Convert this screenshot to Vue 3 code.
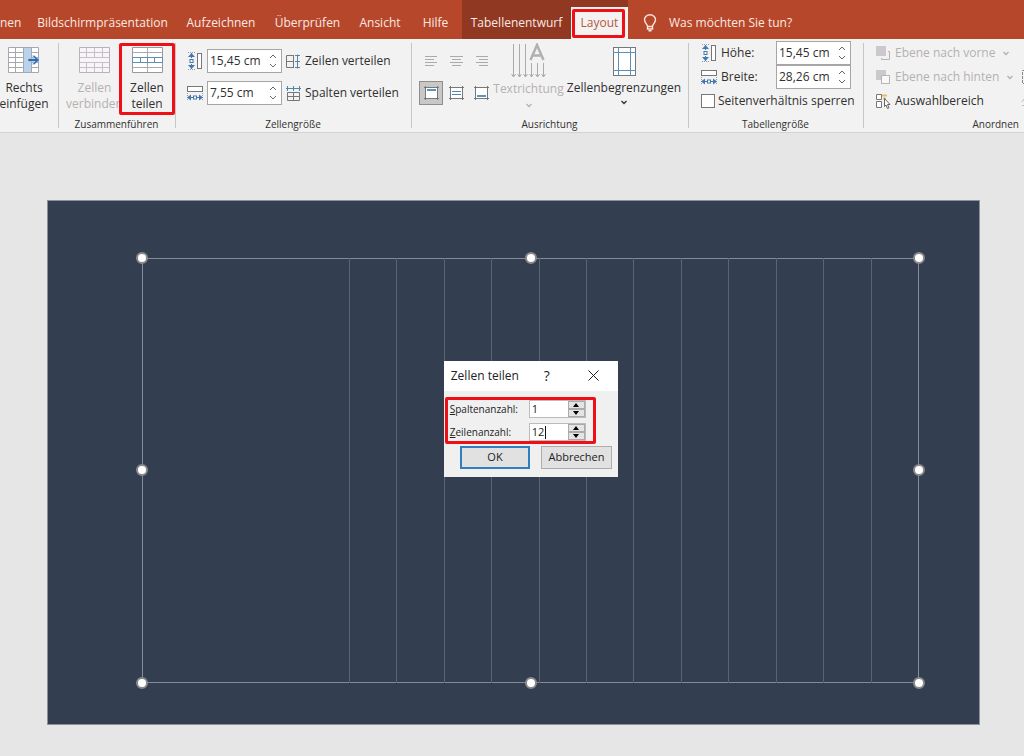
<script setup>
import { ref } from 'vue'

const tabs = [
  { name: 'nen', cls: 'w-cut' },
  { name: 'Bildschirmpräsentation', cls: 'w-xl' },
  { name: 'Aufzeichnen', cls: 'w-l' },
  { name: 'Überprüfen', cls: 'w-m' },
  { name: 'Ansicht', cls: 'w-s' },
  { name: 'Hilfe', cls: 'w-xs' }
]
const cellHeight = ref('15,45 cm')
const cellWidth = ref('7,55 cm')
const tableHeight = ref('15,45 cm')
const tableWidth = ref('28,26 cm')
const lockRatio = ref(false)
const columns = ref('1')
const rows = ref('12')
const handles = ['tl', 'tc', 'tr', 'ml', 'mr', 'bl', 'bc', 'br']
</script>

<template>
  <div class="app">
    <svg class="defs" aria-hidden="true">
      <symbol id="i-height" viewBox="0 0 16 18">
        <path d="M1 .5H9M1 17.5H9" stroke="#9a9a9a" stroke-dasharray="1 1" />
        <path d="M4.500 1V6M4.500 12V17" stroke="#4379b0" />
        <path d="M4.500 1 8 5H1ZM4.500 17 8 13H1Z" fill="#4379b0" />
        <rect x="3" y="7.500" width="3" height="3" fill="#fff" stroke="#4379b0" />
        <rect x="10.500" y="1.500" width="4" height="15" fill="#fff" stroke="#777" />
      </symbol>
      <symbol id="i-width" viewBox="0 0 16 18">
        <rect x=".5" y="2.500" width="15" height="5" fill="#fff" stroke="#777" />
        <path d="M.5 9V16M15.500 9V16" stroke="#9a9a9a" stroke-dasharray="1 1" />
        <path d="M1 13.500H6M10 13.500H15" stroke="#4379b0" />
        <path d="M0 13.500 4 10.500V16.500ZM16 13.500 12 10.500V16.500Z" fill="#4379b0" />
        <rect x="6.500" y="12" width="3" height="3" fill="#fff" stroke="#4379b0" />
      </symbol>
      <symbol id="i-down" viewBox="0 0 8 5">
        <path d="M1.500 1 4 3.500 6.500 1" fill="none" stroke="currentColor" stroke-width="1.300" />
      </symbol>
      <symbol id="i-up" viewBox="0 0 8 5">
        <path d="M1 4 4 1 7 4" fill="none" stroke="currentColor" />
      </symbol>
      <symbol id="i-dn" viewBox="0 0 8 5">
        <path d="M1 1 4 4 7 1" fill="none" stroke="currentColor" />
      </symbol>
      <symbol id="i-box" viewBox="0 0 15 14">
        <rect x="1.500" y="1.500" width="12" height="11" fill="#fff" stroke="#777" />
        <path d="M0 1.500H15M0 12.500H15M1.500 0V14M13.500 0V14" stroke="#777" />
      </symbol>
    </svg>

    <nav class="tabbar">
      <button v-for="t in tabs" :key="t.name" class="tab" :class="t.cls">{{ t.name }}</button>
      <div class="context">
        <button class="tab w-design">Tabellenentwurf</button>
        <button class="tab active marked">Layout</button>
      </div>
      <button class="tell">
        <svg width="14" height="18" viewBox="0 0 14 18" fill="none" stroke="#fbe6df" stroke-width="1.400">
          <path d="M4.500 12.500C4.500 10 1.500 9 1.500 5.800A5.500 5 0 0 1 12.500 5.800C12.500 9 9.500 10 9.500 12.500ZM4.500 12.500V15H9.500V12.500M5.500 16.800H8.500" />
        </svg>
        <span>Was möchten Sie tun?</span>
      </button>
    </nav>

    <div class="ribbon">
      <section class="group">
        <div class="content">
          <button class="big first">
            <svg width="32" height="26" viewBox="0 0 32 26">
              <rect x=".5" y=".5" width="30" height="25" fill="#fff" />
              <path d="M.5 .5H30.500V25.500H.5ZM.5 5.500H30.500M.5 10.500H30.500M.5 15.500H30.500M.5 20.500H30.500M7.500 .5V25.500M15.500 .5V25.500M23.500 .5V25.500" fill="none" stroke="#a5a9ad" />
              <rect x="16" y="1" width="7" height="24" fill="#b9d3ec" />
              <path d="M20 11.500H27L24 8.500H26.500L31.500 13 26.500 17.500H24L27 14.500H20Z" fill="#2e6db4" stroke="#fff" stroke-width=".4" />
            </svg>
            <span>Rechts<br>einfügen</span>
          </button>
        </div>
      </section>

      <section class="group">
        <div class="content merge">
          <button class="big" disabled>
            <svg width="31" height="26" viewBox="0 0 31 26">
              <path d="M.5 .5H30.500V25.500H.5Z" fill="#f8f5f9" stroke="#b9b2bc" />
              <path d="M.5 5.500H30.500M.5 10.500H30.500M.5 15.500H30.500M.5 20.500H30.500M7.500 .5V10.500M15.500 .5V10.500M23.500 .5V10.500M7.500 15.500V25.500M15.500 15.500V25.500M23.500 15.500V25.500" fill="none" stroke="#c6bfc9" />
            </svg>
            <span>Zellen<br>verbinden</span>
          </button>
          <button class="big split marked">
            <svg width="31" height="26" viewBox="0 0 31 26">
              <path d="M.5 .5H30.500V25.500H.5Z" fill="#fff" stroke="#999" />
              <path d="M.5 5.500H30.500M.5 20.500H30.500M15.500 .5V10.500M15.500 15.500V25.500" fill="none" stroke="#aaa" />
              <path d="M.5 10.500H30.500V15.500H.5ZM8.500 10.500V15.500M15.500 10.500V15.500M22.500 10.500V15.500" fill="none" stroke="#5e92b5" />
            </svg>
            <span>Zellen<br>teilen</span>
          </button>
        </div>
        <h2>Zusammenführen</h2>
      </section>

      <section class="group">
        <div class="content size">
          <div class="row">
            <svg width="16" height="18"><use href="#i-height" /></svg>
            <div class="spin">
              <input v-model="cellHeight" aria-label="Zeilenhöhe">
              <span class="steps">
                <button aria-label="Höher"><svg width="8" height="5"><use href="#i-up" /></svg></button>
                <button aria-label="Niedriger"><svg width="8" height="5"><use href="#i-dn" /></svg></button>
              </span>
            </div>
            <button class="cmd">
              <svg width="15" height="15" viewBox="0 0 15 15" fill="none">
                <path d="M8 1.500H.5V13.500H8M.5 7.500H8M7.500 1.500V13.500" stroke="#777" />
                <path d="M11.500 .5V14.500M9 1.500H14M9 7.500H14M9 13.500H14" stroke="#4f86ad" />
              </svg>
              Zeilen verteilen
            </button>
          </div>
          <div class="row">
            <svg width="16" height="18"><use href="#i-width" /></svg>
            <div class="spin">
              <input v-model="cellWidth" aria-label="Spaltenbreite">
              <span class="steps">
                <button aria-label="Breiter"><svg width="8" height="5"><use href="#i-up" /></svg></button>
                <button aria-label="Schmaler"><svg width="8" height="5"><use href="#i-dn" /></svg></button>
              </span>
            </div>
            <button class="cmd">
              <svg width="15" height="15" viewBox="0 0 15 15" fill="none">
                <path d="M1.500 6.500V14.500H13.500V6.500ZM7.500 6V14.500M1.500 10.500H13.500" stroke="#777" />
                <path d="M0 2.500H15M1.500 0V5M7.500 0V5M13.500 0V5" stroke="#4f86ad" />
              </svg>
              Spalten verteilen
            </button>
          </div>
        </div>
        <h2>Zellengröße</h2>
      </section>

      <section class="group">
        <div class="content align">
          <div class="aligns">
            <button disabled aria-label="Linksbündig"><svg width="13" height="10" viewBox="0 0 13 10"><path d="M0 .5H12M0 3.500H9M0 6.500H12M0 9.500H9" stroke="#aaa" /></svg></button>
            <button disabled aria-label="Zentriert"><svg width="13" height="10" viewBox="0 0 13 10"><path d="M0 .5H13M2 3.500H11M0 6.500H13M2 9.500H11" stroke="#aaa" /></svg></button>
            <button disabled aria-label="Rechtsbündig"><svg width="13" height="10" viewBox="0 0 13 10"><path d="M1 .5H13M4 3.500H13M1 6.500H13M4 9.500H13" stroke="#aaa" /></svg></button>
            <button class="on" aria-label="Oben ausrichten"><svg width="15" height="14" viewBox="0 0 15 14"><use href="#i-box" /><path d="M3 4H12" stroke="#5d93b8" stroke-width="2" /></svg></button>
            <button aria-label="Vertikal zentrieren"><svg width="15" height="14" viewBox="0 0 15 14"><use href="#i-box" /><path d="M3 5.500H12M3 8.500H12" stroke="#4f86ad" /></svg></button>
            <button aria-label="Unten ausrichten"><svg width="15" height="14" viewBox="0 0 15 14"><use href="#i-box" /><path d="M3 10H12" stroke="#5d93b8" stroke-width="2" /></svg></button>
          </div>
          <button class="big direction" disabled>
            <svg width="35" height="36" viewBox="0 0 35 36" fill="none">
              <path d="M2.500 1V34M8.500 1V34M14.500 1V34M20.500 20V34M26.500 20V34M32.500 20V34" stroke="#ababab" />
              <path d="M.5 31 2.500 34 4.500 31M6.500 31 8.500 34 10.500 31M12.500 31 14.500 34 16.500 31M18.500 31 20.500 34 22.500 31M24.500 31 26.500 34 28.500 31M30.500 31 32.500 34 34.500 31" stroke="#ababab" />
              <path d="M19.500 17 26 2 32.500 17M22 12.500H30" stroke="#b0b0b0" stroke-width="2.500" />
            </svg>
            <span>Textrichtung</span>
            <svg width="8" height="5"><use href="#i-down" /></svg>
          </button>
          <button class="big margins">
            <svg width="23" height="29" viewBox="0 0 23 29">
              <rect x=".5" y=".5" width="22" height="28" fill="#fff" stroke="#777" />
              <path d="M5.500 0V29M17.500 0V29M0 5.500H23M0 23.500H23" stroke="#5b90b8" />
            </svg>
            <span>Zellenbegrenzungen</span>
            <svg width="8" height="5"><use href="#i-down" /></svg>
          </button>
        </div>
        <h2>Ausrichtung</h2>
      </section>

      <section class="group">
        <div class="content tsize">
          <div class="row">
            <svg width="16" height="18"><use href="#i-height" /></svg>
            <label for="th">Höhe:</label>
            <div class="spin">
              <input id="th" v-model="tableHeight">
              <span class="steps">
                <button aria-label="Höher"><svg width="8" height="5"><use href="#i-up" /></svg></button>
                <button aria-label="Niedriger"><svg width="8" height="5"><use href="#i-dn" /></svg></button>
              </span>
            </div>
          </div>
          <div class="row">
            <svg width="16" height="18"><use href="#i-width" /></svg>
            <label for="tw">Breite:</label>
            <div class="spin">
              <input id="tw" v-model="tableWidth">
              <span class="steps">
                <button aria-label="Breiter"><svg width="8" height="5"><use href="#i-up" /></svg></button>
                <button aria-label="Schmaler"><svg width="8" height="5"><use href="#i-dn" /></svg></button>
              </span>
            </div>
          </div>
          <label class="row check"><input v-model="lockRatio" type="checkbox">Seitenverhältnis sperren</label>
        </div>
        <h2>Tabellengröße</h2>
      </section>

      <section class="group last">
        <div class="content arrange">
          <div class="row">
            <button class="cmd" disabled>
              <svg width="15" height="15" viewBox="0 0 15 15"><rect x="0" y="0" width="10" height="10" fill="#cdc8cd" /><path d="M12 5.500H13.500V13.500H5.500V12" fill="none" stroke="#b5b5b5" /></svg>
              Ebene nach vorne
              <svg class="more" width="8" height="5"><use href="#i-down" /></svg>
            </button>
          </div>
          <div class="row">
            <button class="cmd" disabled>
              <svg width="15" height="15" viewBox="0 0 15 15"><rect x="0" y="0" width="10" height="10" fill="#cdc8cd" /><rect x="5.500" y="5.500" width="8" height="8" fill="#f8f8f8" stroke="#b5b5b5" /></svg>
              Ebene nach hinten
              <svg class="more" width="8" height="5"><use href="#i-down" /></svg>
            </button>
            <svg class="edge" width="3" height="16" viewBox="0 0 3 16" fill="none"><path d="M4 1.500H1.500V14.500H4" stroke="#888" stroke-dasharray="3 1" /></svg>
          </div>
          <div class="row">
            <button class="cmd">
              <svg width="15" height="15" viewBox="0 0 15 15"><path d="M.5 .5H5.500V5.500H.5ZM.5 7.500H5.500V13.500H.5Z" fill="#fff" stroke="#777" /><path d="M6 1.500H11M7 4.500H10" fill="none" stroke="#e3bd68" stroke-width="2" /><path d="M8.500 4.500V12.500L10 11 11.500 14.500 13 13.800 11.500 10.500H14Z" fill="#fff" stroke="#666" /></svg>
              Auswahlbereich
            </button>
            <svg class="edge" width="3" height="16" viewBox="0 0 3 16" fill="none"><path d="M3 6 1 9M1 12.500H3" stroke="#bbb" /></svg>
          </div>
        </div>
        <h2>Anordnen</h2>
      </section>
    </div>

    <main class="workspace">
      <div class="slide">
        <div class="frame">
          <table>
            <colgroup><col class="wide"><col v-for="n in 12" :key="n"></colgroup>
            <tbody><tr><td v-for="n in 13" :key="n"></td></tr></tbody>
          </table>
          <i v-for="h in handles" :key="h" class="handle" :class="h"></i>

          <form class="dialog" role="dialog" aria-labelledby="dlg" @submit.prevent>
            <header>
              <strong id="dlg">Zellen teilen</strong>
              <button type="button" class="help">?</button>
              <button type="button" class="close" aria-label="Schließen">
                <svg width="11" height="11" viewBox="0 0 11 11"><path d="M.5 .5 10.500 10.500M10.500 .5 .5 10.500" stroke="#222" /></svg>
              </button>
            </header>
            <div class="fields">
              <div class="field">
                <label for="cols"><u>S</u>paltenanzahl:</label>
                <div class="num">
                  <input id="cols" v-model="columns">
                  <span>
                    <button type="button" aria-label="Mehr Spalten"><svg width="8" height="4" viewBox="0 0 8 4"><path d="M1 4 4 0 7 4Z" /></svg></button>
                    <button type="button" aria-label="Weniger Spalten"><svg width="8" height="4" viewBox="0 0 8 4"><path d="M1 0 4 4 7 0Z" /></svg></button>
                  </span>
                </div>
              </div>
              <div class="field">
                <label for="rows"><u>Z</u>eilenanzahl:</label>
                <div class="num caret">
                  <input id="rows" v-model="rows">
                  <span>
                    <button type="button" aria-label="Mehr Zeilen"><svg width="8" height="4" viewBox="0 0 8 4"><path d="M1 4 4 0 7 4Z" /></svg></button>
                    <button type="button" aria-label="Weniger Zeilen"><svg width="8" height="4" viewBox="0 0 8 4"><path d="M1 0 4 4 7 0Z" /></svg></button>
                  </span>
                </div>
              </div>
            </div>
            <footer>
              <button class="ok">OK</button>
              <button type="button">Abbrechen</button>
            </footer>
          </form>
        </div>
      </div>
    </main>
  </div>
</template>

<style>
body { margin: 0; background: #e6e6e6; }
</style>

<style scoped>
* { box-sizing: border-box; }
.app {
  min-height: 100vh;
  display: flex;
  flex-direction: column;
  overflow: hidden;
  font-family: "Open Sans", "Noto Sans", sans-serif;
  font-size: 12px;
  line-height: 16px;
  color: #303030;
  background: #e6e6e6;
}
.defs { position: absolute; width: 0; height: 0; }
svg { flex: none; display: block; }
button { font: inherit; color: inherit; background: none; border: 0; padding: 0; margin: 0; white-space: nowrap; }
input { font: inherit; color: inherit; margin: 0; outline: 0; }

.tabbar { display: flex; height: 39px; background: #b7472a; color: #fbe9e4; }
.tab { display: flex; justify-content: center; align-items: center; padding-top: 7px; }
.w-cut { width: 29px; justify-content: flex-start; }
.w-xl { width: 147px; }
.w-l { width: 90px; }
.w-m { width: 83px; }
.w-s { width: 62px; }
.w-xs { width: 51px; padding-right: 2px; }
.context { display: flex; align-items: flex-end; background: #903821; }
.w-design { width: 109px; height: 39px; }
.active { width: 57px; height: 32px; padding: 0; background: #f3f2f1; color: #b7583e; }
.tell { display: flex; align-items: center; gap: 12px; padding: 7px 0 0 15px; }

.marked { position: relative; }
.marked::after { content: ""; position: absolute; inset: 2px 3px 1px 1px; border: 3px solid #ee0f17; border-radius: 2px; }
.split.marked::after { inset: 0; }

.ribbon {
  display: grid;
  grid-template-columns: 58fr 117fr 236fr 277fr 175fr 161fr;
  height: 94px;
  background: #f3f2f2;
  border-bottom: 1px solid #d2d2d2;
}
.group { position: relative; min-width: 0; display: flex; flex-direction: column; }
.group:not(.last)::after { content: ""; position: absolute; right: -1px; top: 4px; bottom: 4px; width: 1px; background: #c8c6c5; }
.content { height: 78px; display: flex; }
h2 { margin: 0; font-size: 10px; line-height: 15px; font-weight: 400; text-align: center; }
.big { display: flex; flex-direction: column; align-items: center; gap: 7px; padding-top: 8px; }
.big:disabled, .cmd:disabled { color: #b3b1b1; }
.first { width: 48px; }
.merge { padding-left: 12px; }
.merge .big { width: 49px; }
.merge .split { width: 56px; height: 72px; margin-top: 4px; padding-top: 4px; background: #f3f2f2; }
.row { display: flex; align-items: center; height: 24px; }
.size { flex-direction: column; gap: 8px; padding: 10px 0 0 12px; }
.size .spin { margin: 0 4px; }
.spin { display: flex; width: 75px; height: 24px; background: #fff; border: 1px solid #a6a6a6; }
.spin input { flex: 1; min-width: 0; border: 0; padding: 0 0 0 2px; background: none; }
.steps { display: flex; flex-direction: column; justify-content: space-evenly; padding-right: 4px; color: #666; }
.cmd { display: flex; align-items: center; gap: 4px; }

.align { padding-left: 8px; }
.aligns { display: grid; grid-template-columns: repeat(3, 24px); grid-auto-rows: 24px; gap: 8px 1px; padding-top: 10px; }
.aligns button { display: grid; place-items: center; }
.aligns .on { background: #c8c8c8; border: 1px solid #8e8e8e; }
.direction { width: 71px; gap: 2px; padding-top: 4px; }
.margins { width: 112px; gap: 4px; margin-left: 4px; }
.direction svg:last-child { margin-top: 4px; }

.tsize { flex-direction: column; padding: 2px 12px 0 13px; }
.tsize .row label { flex: 1; padding-left: 4px; }
.tsize .check { gap: 3px; white-space: nowrap; }
.check input { flex: none; appearance: none; width: 14px; height: 14px; background: #fff; border: 1px solid #777; }
.arrange { flex-direction: column; padding: 2px 0 0 13px; }
.more { margin-left: 3px; }
.edge { margin-left: auto; }
.last h2 { text-align: right; padding-right: 5px; }

.workspace { flex: 1; padding: 67px 44px 30px 47px; }
.slide { aspect-ratio: 933 / 525; padding: 6.100% 6.400% 4.400% 10.100%; background: #333e50; border: 1px solid #8c929b; display: flex; }
.frame { position: relative; flex: 1; }
table { width: 100%; height: 100%; table-layout: fixed; border-collapse: collapse; border: 1px solid #858c96; }
.wide { width: 26.600%; }
td { padding: 0; border: 1px solid #5a6574; border-width: 0 1px; }
td:first-child { border-left-color: #858c96; }
td:last-child { border-right-color: #858c96; }
.handle { position: absolute; width: 12px; height: 12px; margin: -6px; border-radius: 50%; background: #fff; border: 2px solid #8a8a8a; }
.tl, .tc, .tr { top: 0; }
.ml, .mr { top: 50%; }
.bl, .bc, .br { top: 100%; }
.tl, .ml, .bl { left: 0; }
.tc, .bc { left: 50%; }
.tr, .mr, .br { left: 100%; }

.dialog {
  position: absolute;
  left: 50%;
  top: 103px;
  width: 174px;
  margin-left: -87px;
  background: #f0f0f0;
  font-size: 11px;
  line-height: 14px;
  color: #222;
}
.dialog header { display: flex; align-items: center; height: 30px; padding: 0 19px 0 7px; background: #fff; font-size: 12px; }
.dialog strong { font-weight: 400; }
.help { margin-left: auto; font-size: 14px; }
.close { margin-left: 38px; }
.fields { display: flex; flex-direction: column; justify-content: space-between; margin: 6px 22px 0 1px; padding: 0 7px 0 2px; border: 3px solid #ee0f17; border-radius: 2px; height: 47px; }
.field { display: flex; justify-content: space-between; align-items: center; height: 18px; font-size: 10px; white-space: nowrap; }
.num { position: relative; display: flex; width: 57px; height: 18px; background: #fff; border: 1px solid #bbb; }
.num input { flex: 1; min-width: 0; border: 0; padding: 0 0 0 2px; background: none; font-size: 11px; }
.num span { display: grid; grid-template-rows: 1fr 1fr; width: 17px; }
.num button { display: grid; place-items: center; background: #e4e4e4; border: 1px solid #aaa; }
.caret::before { content: ""; position: absolute; left: 15px; top: 2px; width: 1px; height: 13px; background: #111; }
.dialog footer { display: grid; grid-template-columns: 1fr 1fr; gap: 11px; padding: 2px 6px 8px 16px; }
.dialog footer button { height: 23px; background: #e1e1e1; border: 1px solid #adadad; }
.dialog footer .ok { border: 2px solid #2f7fbf; }
</style>
